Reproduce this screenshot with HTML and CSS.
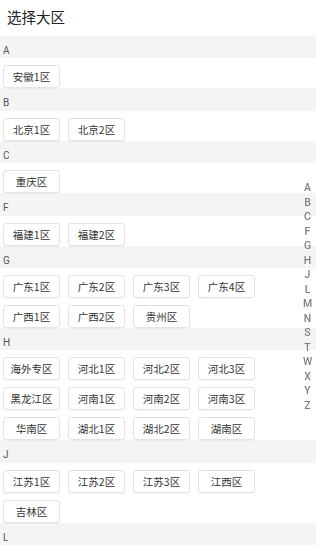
FILE: index.html
```html
<!DOCTYPE html>
<html lang="zh">
<head>
<meta charset="utf-8">
<link rel="stylesheet" href="styles.css">
</head>
<body>
<div class="header">选择大区</div>
<div class="list">
  <div class="band">A</div>
  <div class="group"><span class="btn">安徽1区</span></div>
  <div class="band">B</div>
  <div class="group"><span class="btn">北京1区</span><span class="btn">北京2区</span></div>
  <div class="band">C</div>
  <div class="group"><span class="btn">重庆区</span></div>
  <div class="band">F</div>
  <div class="group"><span class="btn">福建1区</span><span class="btn">福建2区</span></div>
  <div class="band">G</div>
  <div class="group"><span class="btn">广东1区</span><span class="btn">广东2区</span><span class="btn">广东3区</span><span class="btn">广东4区</span><span class="btn">广西1区</span><span class="btn">广西2区</span><span class="btn">贵州区</span></div>
  <div class="band">H</div>
  <div class="group"><span class="btn">海外专区</span><span class="btn">河北1区</span><span class="btn">河北2区</span><span class="btn">河北3区</span><span class="btn">黑龙江区</span><span class="btn">河南1区</span><span class="btn">河南2区</span><span class="btn">河南3区</span><span class="btn">华南区</span><span class="btn">湖北1区</span><span class="btn">湖北2区</span><span class="btn">湖南区</span></div>
  <div class="band">J</div>
  <div class="group"><span class="btn">江苏1区</span><span class="btn">江苏2区</span><span class="btn">江苏3区</span><span class="btn">江西区</span><span class="btn">吉林区</span></div>
  <div class="band">L</div>
</div>
<ul class="index">
  <li>A</li><li>B</li><li>C</li><li>F</li><li>G</li><li>H</li><li>J</li><li>L</li><li>M</li><li>N</li><li>S</li><li>T</li><li>W</li><li>X</li><li>Y</li><li>Z</li>
</ul>
</body>
</html>
```

FILE: styles.css
```css
html, body {
  margin: 0;
  padding: 0;
  background: #fff;
  height: 550px;
  overflow: hidden;
  font-family: "Noto Sans CJK SC", Roboto, sans-serif;
}
.header {
  height: 36px;
  line-height: 34px;
  padding-left: 7px;
  font-size: 14.5px;
  color: #222;
}
.band {
  box-sizing: border-box;
  height: 22.4px;
  padding-top: 4px;
  line-height: 22px;
  padding-left: 3px;
  background: #f4f4f4;
  font-family: Roboto, "Noto Sans", sans-serif;
  font-size: 10px;
  color: #555;
}
.group {
  display: flex;
  flex-wrap: wrap;
  gap: 7px 8px;
  padding: 7px 3px 0;
  width: 260px;
}
.btn {
  box-sizing: border-box;
  width: 57px;
  height: 23px;
  line-height: 21px;
  text-align: center;
  font-size: 10.5px;
  color: #333;
  border: 1px solid #e3e3e3;
  border-radius: 3px;
  background: #fff;
  box-shadow: 0 1px 1px rgba(0,0,0,0.04);
}
.index {
  position: fixed;
  top: 181px;
  right: 0;
  width: 15px;
  margin: 0;
  padding: 0 1px 0 0;
  list-style: none;
  text-align: center;
  font-family: Roboto, "Noto Sans", sans-serif;
  font-size: 10.5px;
  font-weight: 500;
  line-height: 14.5px;
  color: #808080;
}
```
